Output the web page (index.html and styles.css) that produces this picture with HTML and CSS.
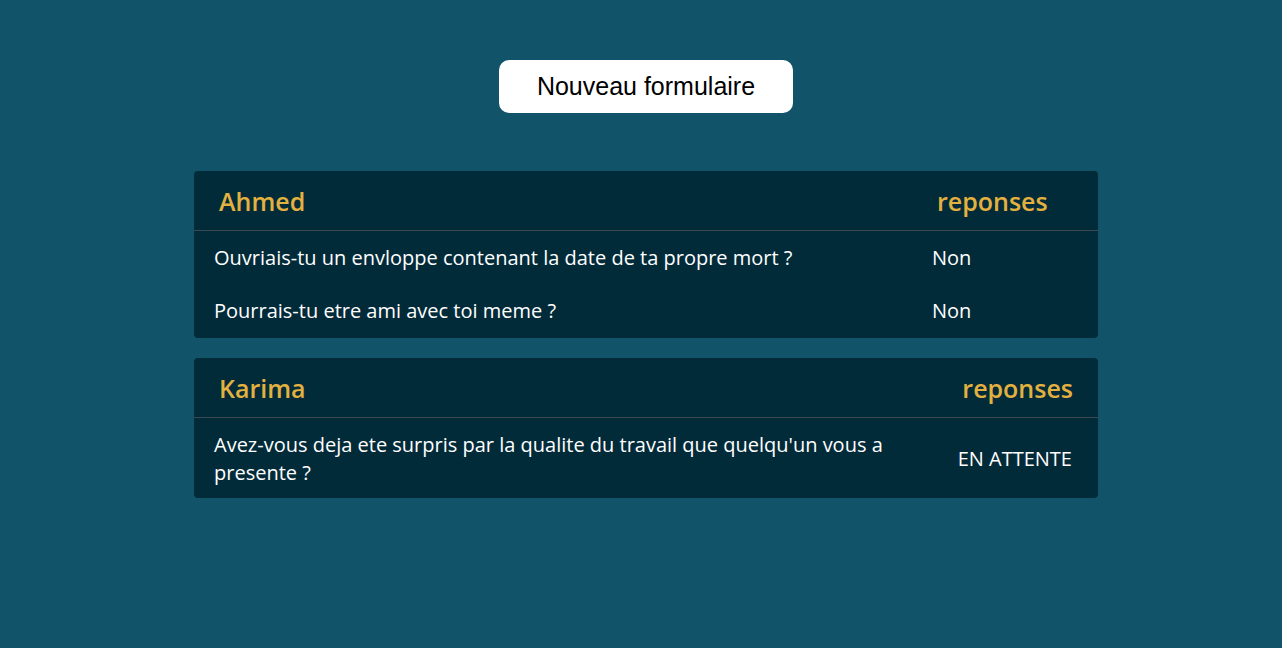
FILE: index.html
```html
<!DOCTYPE html>
<html lang="fr">
<head>
<meta charset="utf-8">
<title>Formulaires</title>
<link rel="stylesheet" href="styles.css">
</head>
<body>
<main class="page">
  <div class="top">
    <button class="new-btn">Nouveau formulaire</button>
  </div>
  <section class="card card-a">
    <div class="head">
      <div class="name">Ahmed</div>
      <div class="label">reponses</div>
    </div>
    <div class="row">
      <div class="q">Ouvriais-tu un envloppe contenant la date de ta propre mort ?</div>
      <div class="a">Non</div>
    </div>
    <div class="row last">
      <div class="q">Pourrais-tu etre ami avec toi meme ?</div>
      <div class="a">Non</div>
    </div>
  </section>
  <section class="card card-b">
    <div class="head">
      <div class="name">Karima</div>
      <div class="label right">reponses</div>
    </div>
    <div class="row">
      <div class="q">Avez-vous deja ete surpris par la qualite du travail que quelqu'un vous a presente ?</div>
      <div class="a right">EN ATTENTE</div>
    </div>
  </section>
</main>
</body>
</html>
```

FILE: styles.css
```css
html, body {
  margin: 0;
  padding: 0;
  background: #115469;
  height: 100%;
}
.page {
  display: flex;
  flex-direction: column;
  align-items: center;
  padding: 60px 0 0 10px;
  font-family: "Open Sans", "Noto Sans", sans-serif;
}
.top {
  margin-bottom: 58px;
}
.new-btn {
  display: block;
  width: 294px;
  height: 53px;
  background: #ffffff;
  border: none;
  border-radius: 10px;
  font-family: "Liberation Sans", Arial, sans-serif;
  font-size: 25px;
  color: #000;
  padding: 0;
}
.card {
  width: 904px;
  background: #022b3a;
  border-radius: 4px;
  margin-bottom: 20px;
  display: grid;
  grid-template-columns: 1fr 186px;
}
.head, .row {
  display: contents;
}
.name, .label {
  height: 59px;
  line-height: 60px;
  border-bottom: 1px solid #3b4a50;
  color: #e3b13f;
  font-weight: 600;
  font-size: 25px;
  padding-left: 25px;
}
.label.right {
  text-align: right;
  padding-left: 0;
  padding-right: 25px;
}
.q, .a {
  color: #ffffff;
  font-size: 20px;
  line-height: 28px;
}
.card-a .q, .card-a .a {
  padding: 13px 20px 12px;
}
.card-a .last .q, .card-a .last .a {
  padding: 13px 20px 13px;
}
.card-b .q, .card-b .a {
  padding: 13px 20px 11px;
}
.a {
  display: flex;
  align-items: center;
}
.card-b .a {
  justify-content: flex-end;
  padding-right: 26px;
}
.card-b .q {
  padding-right: 8px;
}
```
